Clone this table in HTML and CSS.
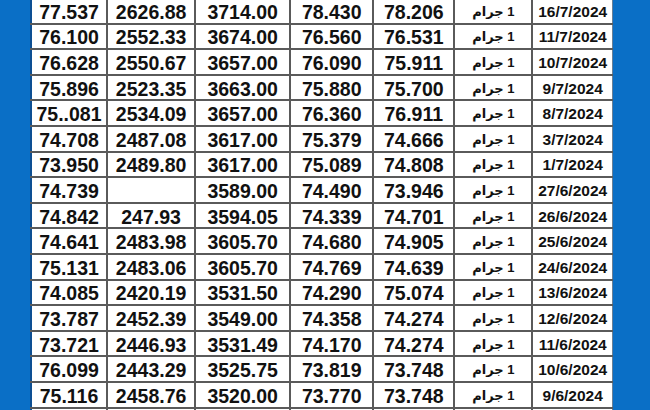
FILE: index.html
```html
<!DOCTYPE html>
<html lang="ar">
<head>
<meta charset="utf-8">
<title>أسعار الذهب</title>
<link rel="stylesheet" href="styles.css">
</head>
<body>
<div class="frame">
  <table class="prices">
    <colgroup>
      <col class="c1"><col class="c2"><col class="c3"><col class="c4"><col class="c5"><col class="c6"><col class="c7">
    </colgroup>
    <tbody>
      <tr><td>77.537</td><td>2626.88</td><td>3714.00</td><td>78.430</td><td>78.206</td><td class="unit" dir="rtl">1 جرام</td><td class="date">16/7/2024</td></tr>
      <tr><td>76.100</td><td>2552.33</td><td>3674.00</td><td>76.560</td><td>76.531</td><td class="unit" dir="rtl">1 جرام</td><td class="date">11/7/2024</td></tr>
      <tr><td>76.628</td><td>2550.67</td><td>3657.00</td><td>76.090</td><td>75.911</td><td class="unit" dir="rtl">1 جرام</td><td class="date">10/7/2024</td></tr>
      <tr><td>75.896</td><td>2523.35</td><td>3663.00</td><td>75.880</td><td>75.700</td><td class="unit" dir="rtl">1 جرام</td><td class="date">9/7/2024</td></tr>
      <tr><td>75..081</td><td>2534.09</td><td>3657.00</td><td>76.360</td><td>76.911</td><td class="unit" dir="rtl">1 جرام</td><td class="date">8/7/2024</td></tr>
      <tr><td>74.708</td><td>2487.08</td><td>3617.00</td><td>75.379</td><td>74.666</td><td class="unit" dir="rtl">1 جرام</td><td class="date">3/7/2024</td></tr>
      <tr><td>73.950</td><td>2489.80</td><td>3617.00</td><td>75.089</td><td>74.808</td><td class="unit" dir="rtl">1 جرام</td><td class="date">1/7/2024</td></tr>
      <tr><td>74.739</td><td></td><td>3589.00</td><td>74.490</td><td>73.946</td><td class="unit" dir="rtl">1 جرام</td><td class="date">27/6/2024</td></tr>
      <tr><td>74.842</td><td>247.93</td><td>3594.05</td><td>74.339</td><td>74.701</td><td class="unit" dir="rtl">1 جرام</td><td class="date">26/6/2024</td></tr>
      <tr><td>74.641</td><td>2483.98</td><td>3605.70</td><td>74.680</td><td>74.905</td><td class="unit" dir="rtl">1 جرام</td><td class="date">25/6/2024</td></tr>
      <tr><td>75.131</td><td>2483.06</td><td>3605.70</td><td>74.769</td><td>74.639</td><td class="unit" dir="rtl">1 جرام</td><td class="date">24/6/2024</td></tr>
      <tr><td>74.085</td><td>2420.19</td><td>3531.50</td><td>74.290</td><td>75.074</td><td class="unit" dir="rtl">1 جرام</td><td class="date">13/6/2024</td></tr>
      <tr><td>73.787</td><td>2452.39</td><td>3549.00</td><td>74.358</td><td>74.274</td><td class="unit" dir="rtl">1 جرام</td><td class="date">12/6/2024</td></tr>
      <tr><td>73.721</td><td>2446.93</td><td>3531.49</td><td>74.170</td><td>74.274</td><td class="unit" dir="rtl">1 جرام</td><td class="date">11/6/2024</td></tr>
      <tr><td>76.099</td><td>2443.29</td><td>3525.75</td><td>73.819</td><td>73.748</td><td class="unit" dir="rtl">1 جرام</td><td class="date">10/6/2024</td></tr>
      <tr><td>75.116</td><td>2458.76</td><td>3520.00</td><td>73.770</td><td>73.748</td><td class="unit" dir="rtl">1 جرام</td><td class="date">9/6/2024</td></tr>
      <tr class="tail"><td></td><td></td><td></td><td></td><td></td><td></td><td></td></tr>
    </tbody>
  </table>
</div>
</body>
</html>
```
FILE: styles.css
```css
html, body {
  margin: 0;
  padding: 0;
}
body {
  width: 650px;
  height: 410px;
  overflow: hidden;
  background: #0a6fc6;
  font-family: "Liberation Sans", Arial, "DejaVu Sans", sans-serif;
}
.frame {
  display: flex;
  padding-left: 30px;
  margin-top: -3px;
}
.prices {
  border-collapse: collapse;
  table-layout: fixed;
  width: 583px;
  background: #fff;
  border-left: 2px solid #0d4f93;
}
.c1 { width: 76px; }
.c2 { width: 88px; }
.c3 { width: 95px; }
.c4 { width: 83px; }
.c5 { width: 81px; }
.c6 { width: 78px; }
.c7 { width: 80px; }
.prices tr {
  height: 25.6px;
}
.prices td {
  border: 2px solid #5a5a5a;
  padding: 2px 0 0;
  text-align: center;
  font-weight: bold;
  font-size: 19.5px;
  line-height: 20px;
  color: #111;
  white-space: nowrap;
  overflow: hidden;
}
.prices td:first-child {
  border-left: none;
}
.prices td:last-child {
  border-right: 1px solid #6a7f95;
}
.prices td.unit {
  font-size: 13px;
  font-family: "Liberation Sans", "DejaVu Sans", "Noto Sans", sans-serif;
}
.prices td.date {
  font-size: 15.5px;
}
```
